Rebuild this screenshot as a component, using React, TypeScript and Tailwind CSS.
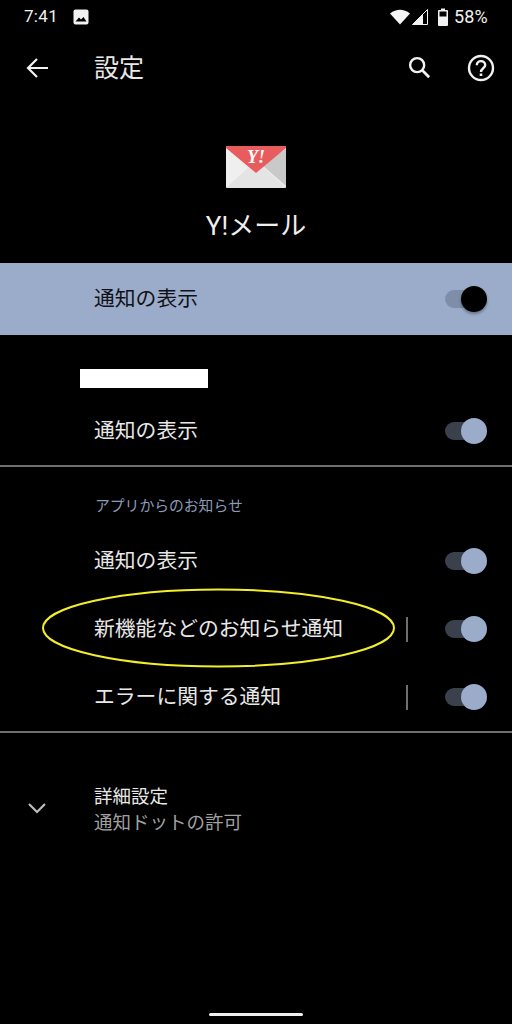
import React from "react";

const font = { fontFamily: '"Roboto","Noto Sans CJK JP",sans-serif' };

function Toggle({ dark = false }: { dark?: boolean }) {
  return (
    <div className="relative w-[42px] h-[28px] shrink-0">
      <div className={`absolute left-0 top-[5px] w-[36px] h-[18px] rounded-full ${dark ? "bg-[#7f8ea8]" : "bg-[#3a404c]"}`} />
      <div className={`absolute right-0 top-[1px] w-[26px] h-[26px] rounded-full ${dark ? "bg-black shadow-[0_2px_3px_rgba(0,0,0,0.35)]" : "bg-[#9bacca]"}`} />
    </div>
  );
}

function Row({ label, sep = false }: { label: string; sep?: boolean }) {
  return (
    <div className="h-[68px] flex items-center pl-[94px] pr-[25px]">
      <span className="flex-1 text-[20.8px] text-[#e8e8e8] leading-none pt-[1px]">{label}</span>
      {sep && <div className="w-[2px] h-[25px] bg-[#6f6f6f] mr-[37px] ml-[-1px]" />}
      <Toggle />
    </div>
  );
}

export default function App() {
  return (
    <div className="relative w-[512px] h-[1024px] bg-black overflow-hidden flex flex-col text-white" style={font}>
      <div className="h-[33px] flex items-center pl-[24px] pr-[24px] shrink-0">
        <span className="text-[17px] text-[#f0f0f0] tracking-[0.3px] w-[50px]">7:41</span>
        <svg width="16" height="16" viewBox="0 0 16 16" className="ml-[-1px]">
          <rect x="0.5" y="0.5" width="15" height="15" rx="2" fill="#f2f2f2" />
          <path d="M2.5 12.5 L6 8.5 L8 10.5 L10.5 8 L13.5 12.5 Z" fill="#000" />
        </svg>
        <div className="flex-1" />
        <svg width="20" height="16" viewBox="0 0 20 16">
          <path d="M0 4.5 Q10 -3 20 4.5 L10 15.5 Z" fill="#f5f5f5" />
        </svg>
        <svg width="16" height="16" viewBox="0 0 16 16" className="ml-[2px]">
          <path d="M15.5 0.5 V15.5 H0.5 Z" fill="none" stroke="#f2f2f2" strokeWidth="1" />
          <path d="M11 5 V15.5 H0.5 L11 5 Z" fill="#f2f2f2" />
        </svg>
        <svg width="10" height="18" viewBox="0 0 10 18" className="ml-[10px]">
          <path d="M3 0.5 H7 V2 H9 Q10 2 10 3 V17 Q10 18 9 18 H1 Q0 18 0 17 V3 Q0 2 1 2 H3 Z" fill="#f2f2f2" />
          <rect x="1.5" y="3.5" width="7" height="5" fill="#000" />
        </svg>
        <span className="ml-[6px] text-[18px] text-[#f0f0f0] tracking-[0.2px]">58%</span>
      </div>

      <div className="h-[70px] flex items-center shrink-0 pl-[25px] pr-[17px]">
        <svg width="24" height="24" viewBox="0 0 24 24" fill="none" stroke="#f2f2f2" strokeWidth="2.2">
          <path d="M23 12 H3 M12 3 L3 12 L12 21" />
        </svg>
        <span className="ml-[45px] text-[25px] text-[#e8e8e8] leading-none">設定</span>
        <div className="flex-1" />
        <svg width="24" height="26" viewBox="0 0 26 26" fill="none" stroke="#f2f2f2" strokeWidth="2.6" className="mt-[-2px]">
          <circle cx="11" cy="11" r="7.6" />
          <path d="M16.5 16.5 L24 24" strokeWidth="3" />
        </svg>
        <div className="w-[64px] h-[28px] flex justify-end items-center">
          <svg width="28" height="28" viewBox="0 0 28 28" fill="none" stroke="#f2f2f2" strokeWidth="2.4">
            <circle cx="14" cy="14" r="12" />
            <path d="M9.8 11.2 C9.8 5.8 18.2 5.8 18.2 11 C18.2 14.2 14 14.4 14 18" strokeWidth="2.4" />
            <path d="M14 19.5 V22" strokeWidth="2.6" />
          </svg>
        </div>
      </div>

      <div className="h-[160px] flex flex-col items-center shrink-0">
        <svg width="60" height="44" viewBox="0 0 60 44" className="mt-[42px]">
          <rect x="0" y="1" width="60" height="42" rx="1.5" fill="#efefef" />
          <path d="M60 4 V41 L36 20 Z" fill="#c9c9c9" />
          <path d="M0 43 L24 21 Q30 18 36 21 L60 43 Z" fill="#e4e4e4" />
          <path d="M0 1 H60 V3 L30 28 L0 3 Z" fill="#e85c5e" />
          <text x="30" y="18" textAnchor="middle" fontFamily="'Liberation Serif',serif" fontWeight="700" fontSize="18" fontStyle="italic" fill="#fff">Y!</text>
        </svg>
        <div className="mt-[20px] text-[26px] leading-[34px] text-[#efefef]">Y!メール</div>
      </div>

      <div className="h-[72px] bg-[#9bacca] flex items-center pl-[94px] pr-[25px] shrink-0">
        <span className="flex-1 text-[20.8px] text-[#101217] leading-none pt-[1px]">通知の表示</span>
        <Toggle dark />
      </div>

      <div className="w-[128px] h-[19px] bg-white ml-[80px] mt-[34px] shrink-0" />
      <div className="mt-[9px]"><Row label="通知の表示" /></div>
      <div className="h-[2px] bg-[#6f6f6f] shrink-0" />

      <div className="h-[60px] pl-[95px] pt-[30px] shrink-0">
        <div className="text-[14.8px] leading-[18px] text-[#8c9cb8]">アプリからのお知らせ</div>
      </div>
      <Row label="通知の表示" />
      <Row label="新機能などのお知らせ通知" sep />
      <Row label="エラーに関する通知" sep />
      <div className="h-[2px] bg-[#6f6f6f] shrink-0" />

      <div className="relative pl-[94px] pt-[52px]">
        <svg width="24" height="24" viewBox="0 0 24 24" fill="none" stroke="#bdbdbd" strokeWidth="2.2" className="absolute left-[25px] top-[63px]">
          <path d="M4 8 L12 16 L20 8" />
        </svg>
        <div className="text-[18.5px] leading-[25px] text-[#e8e8e8]">詳細設定</div>
        <div className="text-[18.5px] leading-[25px] text-[#a0a0a0] pt-[1px]">通知ドットの許可</div>
      </div>

      <svg width="512" height="1024" viewBox="0 0 512 1024" className="absolute left-0 top-0 pointer-events-none" fill="none">
        <ellipse cx="218.5" cy="628" rx="175.5" ry="38.5" stroke="#f3ee2c" strokeWidth="2" />
      </svg>
      <div className="absolute left-[209px] top-[1013px] w-[94px] h-[3px] rounded-full bg-[#efefef]" />
    </div>
  );
}
